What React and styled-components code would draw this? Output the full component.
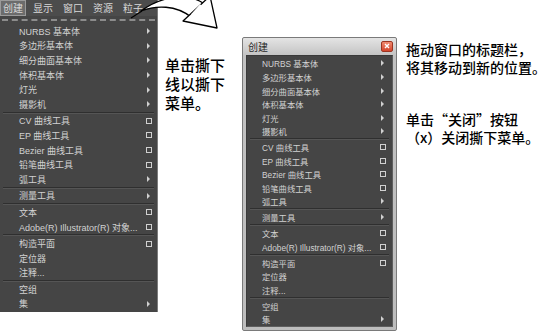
import React from 'react';
import styled, { createGlobalStyle } from 'styled-components';

const GlobalStyle = createGlobalStyle`
  html, body {
    margin: 0;
    padding: 0;
    background: #ffffff;
  }
  body {
    font-family: "Liberation Sans", "Noto Sans CJK SC", sans-serif;
  }
`;

const Page = styled.div`
  position: relative;
  width: 554px;
  height: 335px;
  display: flex;
  align-items: flex-start;
  overflow: hidden;
  background: #ffffff;
`;

/* ---------- left: the menu as it drops from the menu bar ---------- */

const DropMenu = styled.div`
  width: 157px;
  height: 312px;
  background: #454545;
  border-right: 1px solid #7c7c7c;
  display: flex;
  flex-direction: column;
  flex-shrink: 0;
`;

const MenuBar = styled.div`
  height: 16px;
  display: flex;
  align-items: center;
  gap: 4px;
  background: #4c4c4c;
`;

const BarItem = styled.div`
  height: 14px;
  padding: 0 2px;
  display: flex;
  align-items: center;
  white-space: nowrap;
  flex-shrink: 0;
  font-family: "Noto Sans CJK SC", sans-serif;
  font-size: 10px;
  line-height: 1;
  color: #d8d8d8;
  background: ${(p) => (p.$active ? '#6c6c6c' : 'transparent')};
  border: 1px solid ${(p) => (p.$active ? '#9a9a9a' : 'transparent')};
`;

const TearOff = styled.div`
  height: 8px;
  margin: 0 2px;
  display: flex;
  align-items: center;
  &::after {
    content: '';
    flex: 1;
    border-top: 2px dashed #8c8c8c;
  }
`;

/* ---------- shared menu list ---------- */

const List = styled.div`
  display: flex;
  flex-direction: column;
  padding-top: ${(p) => p.$top}px;
`;

const Row = styled.div`
  height: ${(p) => p.$h}px;
  display: flex;
  align-items: center;
  padding-left: ${(p) => p.$indent}px;
  padding-right: ${(p) => p.$right}px;
  font-size: ${(p) => p.$fs}px;
  color: #d2d2d2;
  white-space: nowrap;
`;

const Label = styled.span`
  flex: 1;
`;

const SubArrow = styled.span`
  width: 0;
  height: 0;
  margin-right: 2px;
  border-left: 3px solid #d0d0d0;
  border-top: 3px solid transparent;
  border-bottom: 3px solid transparent;
`;

const OptBox = styled.span`
  width: 4px;
  height: 4px;
  border: 1px solid #d0d0d0;
`;

const Sep = styled.div`
  height: ${(p) => p.$h}px;
  margin: 0 3px;
  display: flex;
  flex-direction: column;
  justify-content: center;
  &::after {
    content: '';
    border-top: 1px solid #2f2f2f;
    border-bottom: 1px solid #555555;
  }
`;

const items = [
  { label: 'NURBS 基本体', mark: 'sub' },
  { label: '多边形基本体', mark: 'sub' },
  { label: '细分曲面基本体', mark: 'sub' },
  { label: '体积基本体', mark: 'sub' },
  { label: '灯光', mark: 'sub' },
  { label: '摄影机', mark: 'sub' },
  'sep',
  { label: 'CV 曲线工具', mark: 'opt' },
  { label: 'EP 曲线工具', mark: 'opt' },
  { label: 'Bezier 曲线工具', mark: 'opt' },
  { label: '铅笔曲线工具', mark: 'opt' },
  { label: '弧工具', mark: 'sub' },
  'sep',
  { label: '测量工具', mark: 'sub' },
  'sep',
  { label: '文本', mark: 'opt' },
  { label: 'Adobe(R) Illustrator(R) 对象...', mark: 'opt' },
  'sep',
  { label: '构造平面', mark: 'opt' },
  { label: '定位器' },
  { label: '注释...' },
  'sep',
  { label: '空组' },
  { label: '集', mark: 'sub' },
];

function MenuList({ top, rowH, sepH, fs, indent, right }) {
  return (
    <List $top={top}>
      {items.map((it, i) =>
        it === 'sep' ? (
          <Sep key={i} $h={sepH} />
        ) : (
          <Row key={i} $h={rowH} $fs={fs} $indent={indent} $right={right}>
            <Label>{it.label}</Label>
            {it.mark === 'sub' && <SubArrow />}
            {it.mark === 'opt' && <OptBox />}
          </Row>
        )
      )}
    </List>
  );
}

/* ---------- notes ---------- */

const Note = styled.div`
  font-family: "Noto Sans CJK SC", sans-serif;
  font-weight: 500;
  color: #000000;
  white-space: nowrap;
  font-size: ${(p) => p.$fs}px;
  margin-top: ${(p) => p.$top}px;
  display: flex;
  flex-direction: column;
`;

const NoteLine = styled.div`
  height: ${(p) => p.$lh}px;
  line-height: ${(p) => p.$lh}px;
`;

const TearNote = styled.div`
  width: 84px;
  padding-left: 7px;
  box-sizing: border-box;
  flex-shrink: 0;
`;

const SideNotes = styled.div`
  margin-left: 9px;
  margin-top: 40px;
  display: flex;
  flex-direction: column;
  gap: 34px;
`;

/* ---------- torn-off window ---------- */

const Window = styled.div`
  margin-top: 37px;
  width: 155px;
  height: 294px;
  flex-shrink: 0;
  box-sizing: border-box;
  border: 1px solid #7a7a7a;
  border-radius: 2px;
  background: linear-gradient(180deg, #e4e4e4 0px, #c2c2c2 18px, #bdbdbd 100%);
  display: flex;
  flex-direction: column;
  padding: 0 3px 3px;
`;

const TitleBar = styled.div`
  height: 19px;
  display: flex;
  align-items: center;
  justify-content: space-between;
  padding: 0 0 0 2px;
`;

const Title = styled.span`
  font-family: "Noto Sans CJK SC", sans-serif;
  font-size: 10px;
  color: #2a2a2a;
`;

const CloseBtn = styled.div`
  width: 12px;
  height: 11px;
  box-sizing: border-box;
  border: 1px solid #9c3522;
  border-radius: 2px;
  background: linear-gradient(180deg, #f08a70, #d4452c);
  display: flex;
  align-items: center;
  justify-content: center;
`;

const Panel = styled.div`
  flex: 1;
  background: #454545;
  border: 1px solid #5e5e5e;
  border-top-color: #3a3a3a;
  border-left-color: #3a3a3a;
`;

const ArrowLayer = styled.svg`
  position: absolute;
  left: 0;
  top: 0;
  pointer-events: none;
`;

function Lines({ lines, lh }) {
  return lines.map((t, i) => (
    <NoteLine key={i} $lh={lh}>
      {t}
    </NoteLine>
  ));
}

export default function App() {
  return (
    <>
      <GlobalStyle />
      <Page>
        <DropMenu>
          <MenuBar>
            <BarItem $active>创建</BarItem>
            <BarItem>显示</BarItem>
            <BarItem>窗口</BarItem>
            <BarItem>资源</BarItem>
            <BarItem>粒子</BarItem>
          </MenuBar>
          <TearOff />
          <MenuList top={0} rowH={14.6} sepH={2} fs={9} indent={19} right={5} />
        </DropMenu>

        <TearNote>
          <Note $fs={15} $top={55}>
            <Lines lh={19} lines={['单击撕下', '线以撕下', '菜单。']} />
          </Note>
        </TearNote>

        <Window>
          <TitleBar>
            <Title>创建</Title>
            <CloseBtn>
              <svg width="6" height="6" viewBox="0 0 6 6">
                <path d="M1 1 L5 5 M5 1 L1 5" stroke="#ffffff" strokeWidth="1.4" />
              </svg>
            </CloseBtn>
          </TitleBar>
          <Panel>
            <MenuList top={1} rowH={13.55} sepH={2.4} fs={8.3} indent={15} right={6} />
          </Panel>
        </Window>

        <SideNotes>
          <Note $fs={14} $top={0}>
            <Lines lh={18} lines={['拖动窗口的标题栏，', '将其移动到新的位置。']} />
          </Note>
          <Note $fs={14} $top={0}>
            <Lines lh={18} lines={['单击“关闭”按钮', '（x）关闭撕下菜单。']} />
          </Note>
        </SideNotes>

        <ArrowLayer width="554" height="335" viewBox="0 0 554 335">
          <path d="M131 18 L142 11" stroke="#000000" strokeWidth="1.2" />
          <path
            d="M141 11 C160 -3 186 -8 203 3 L191 17 C176 5 156 5 141 11 Z"
            fill="#ffffff"
            stroke="#000000"
            strokeWidth="1.3"
            strokeLinejoin="round"
          />
          <polygon
            points="210,-4 217,28 183,21"
            fill="#ffffff"
            stroke="#000000"
            strokeWidth="1.3"
            strokeLinejoin="round"
          />
          <path d="M201 5 L192 15" stroke="#ffffff" strokeWidth="2.6" />
        </ArrowLayer>
      </Page>
    </>
  );
}
